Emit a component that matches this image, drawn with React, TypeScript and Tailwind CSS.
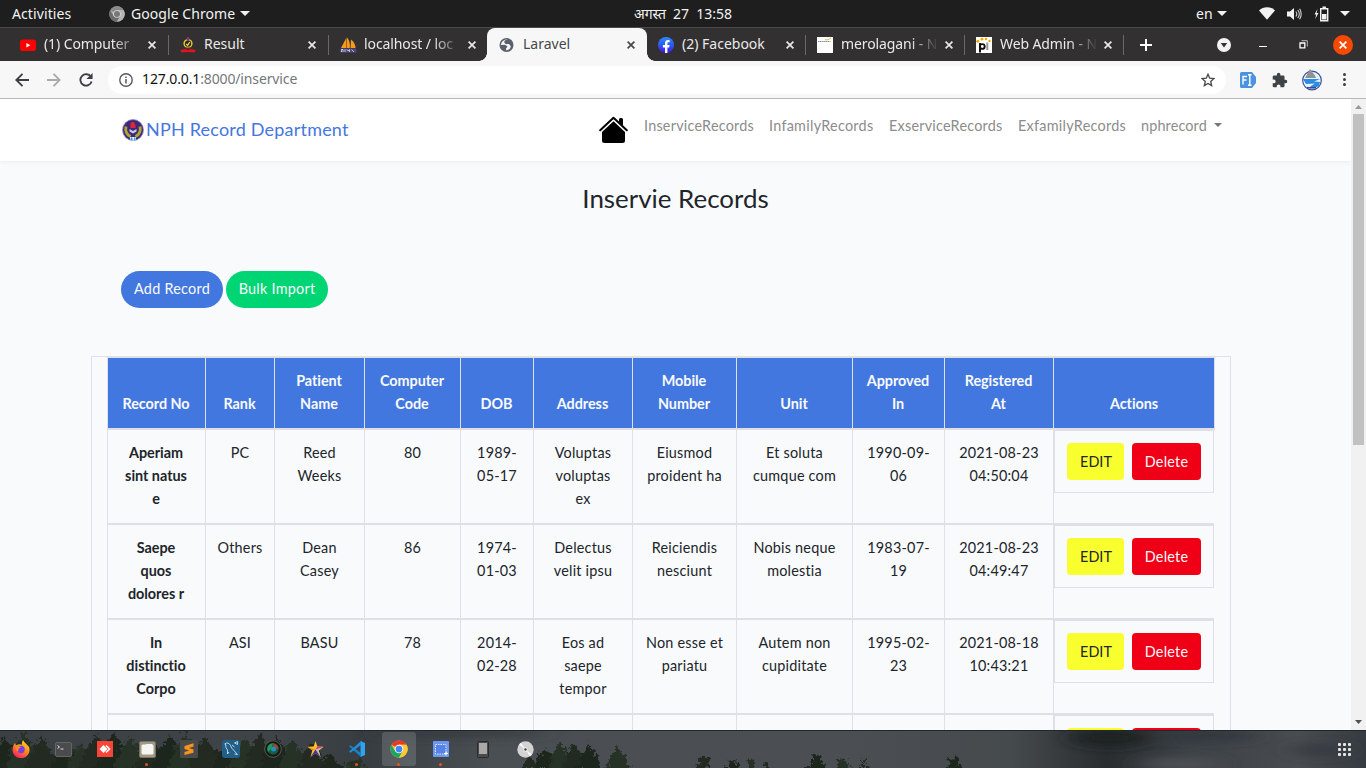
import React from "react";

const UI = "font-['Noto_Sans',sans-serif]";
const PAGE = "font-['Lato','Open_Sans',sans-serif]";

/* ---------- small shared drawings ---------- */

function Caret({ className = "" }: { className?: string }) {
  return (
    <svg width="10" height="5" viewBox="0 0 10 5" className={className}>
      <path d="M0 0h10L5 5z" fill="currentColor" />
    </svg>
  );
}

function Close() {
  return (
    <svg width="8" height="8" viewBox="0 0 8 8" className="shrink-0">
      <path d="M.6.6l6.8 6.8M7.4.6L.6 7.4" stroke="currentColor" strokeWidth="1.7" />
    </svg>
  );
}

function ChromeLogo({ size, mono = false }: { size: number; mono?: boolean }) {
  const c = mono ? ["#8a8a8a", "#6c6c6c", "#b5b5b5", "#777", "#d5d5d5"] : ["#e33b2e", "#1fa463", "#fcc934", "#4285f4", "#fff"];
  return (
    <svg width={size} height={size} viewBox="0 0 48 48">
      <circle cx="24" cy="24" r="23" fill={c[2]} />
      <path d="M24 24L4 12.5A23 23 0 0 1 44 12.5H24z" fill={c[0]} />
      <path d="M4 12.5A23 23 0 0 0 24 47L34 30 24 34 14 30z" fill={c[1]} />
      <path d="M44 12.5H24v10l10 7L24 47A23 23 0 0 0 44 12.5z" fill={c[2]} />
      <circle cx="24" cy="24" r="11.5" fill={c[4]} />
      <circle cx="24" cy="24" r="9" fill={c[3]} />
    </svg>
  );
}

/* ---------- desktop top bar ---------- */

function TopBar() {
  return (
    <header className="relative flex h-[27px] shrink-0 items-center justify-between bg-[#1e1e1e] text-[14px] text-[#f2f2f2]">
      <div className="flex items-center pl-3">
        <span className="w-[97px] tracking-[0.1px]">Activities</span>
        <ChromeLogo size={16} mono />
        <span className="ml-[6px] w-[109px] tracking-[0.06px]">Google Chrome</span>
        <Caret />
      </div>
      <div className="absolute left-[634px] flex gap-[7px] whitespace-pre">
        <span>अगस्त</span>
        <span>27  13:58</span>
      </div>
      <div className="flex items-center pr-4">
        <span className="w-[21px]">en</span>
        <Caret />
        <svg width="16" height="13" viewBox="0 0 16 13" className="ml-8">
          <path d="M0 3.4C4.6-.9 11.400-.9 16 3.400L8 12.800z" fill="#f2f2f2" />
        </svg>
        <svg width="15" height="14" viewBox="0 0 15 14" className="ml-3">
          <path d="M0 4.500h3L7 1v12L3 9.500H0z" fill="#f2f2f2" />
          <path d="M8.800 4.500q2 2.500 0 5M10.800 3q3 4 0 8M12.600 1.800q3.200 5.200 0 10.400" fill="none" stroke="#cfcfcf" strokeWidth="1.100" />
        </svg>
        <svg width="15" height="16" viewBox="0 0 15 16" className="ml-3">
          <path d="M3.500 3L.5 8.500h1.700L1.200 13 4.500 7H2.600z" fill="#f2f2f2" />
          <path d="M6.700 2.700h7v12h-7z" fill="none" stroke="#f2f2f2" strokeWidth="1.400" />
          <path d="M8.500.5h3.400v2H8.500zM8 8h4.500v5.500H8z" fill="#f2f2f2" />
        </svg>
        <Caret className="ml-[11px]" />
      </div>
    </header>
  );
}

/* ---------- favicons ---------- */

const YouTube = () => (
  <svg width="16" height="16" viewBox="0 0 16 16">
    <rect y="2.500" width="16" height="11.500" rx="2.800" fill="#f00" />
    <path d="M6.400 6v4.500l4-2.250z" fill="#fff" />
  </svg>
);

const ResultIcon = () => (
  <svg width="16" height="16" viewBox="0 0 16 16">
    <circle cx="8" cy="6.500" r="3.900" fill="#2c2440" stroke="#e8d524" strokeWidth="1.400" />
    <path d="M7 0h1.800l.6 3H6.500z" fill="#8e2a8a" />
    <path d="M6.300 7l1.300 1.300L9.800 5" fill="none" stroke="#f4e640" strokeWidth="1.200" />
    <path d="M5.500 10.500h5l1 2h-7z" fill="#7a1c2c" />
    <path d="M.3 13.200Q4 11.500 8 12.900q4-1.400 7.700.3l-1.500 2.300Q8 14.300 1.800 15.500z" fill="#e0141e" />
  </svg>
);

const PhpMyAdmin = () => (
  <svg width="17" height="16" viewBox="0 0 17 16">
    <path d="M6.500.5L1 11h5.500zM7 .5q3.500 4 2.800 10.500H7zM11 2.500q4.500 3.500 4.500 8.500h-5z" fill="#f59a1b" />
    <path d="M.5 11.500h15.500l.5 4H0z" fill="#4f4a7d" />
    <path d="M1.500 15v-2.500h1.500V15m2-2.800V15m2-2.500L8 14l1.500-1.500V15m2-2.500L14 15" stroke="#d8d6f2" strokeWidth=".8" fill="none" />
  </svg>
);

const Globe = () => (
  <svg width="15" height="16" viewBox="0 0 15 16">
    <circle cx="7.500" cy="8" r="7" fill="#5b616b" />
    <path d="M9 2.500Q6.500 3 6 5.500l1.500 1.500h2.500l1.800 2.200c-.5 2.600-2 4-4.600 4.200L7 11.500l1.600-2L6 7.800 2 8c.2-3.500 3.300-6 7-5.500z" fill="#f7f7f7" />
    <path d="M9 2.300Q5.500 3 5 5l1.800 2.200 3-.7L12 4z" fill="#5b616b" />
  </svg>
);

const Facebook = () => (
  <svg width="16" height="16" viewBox="0 0 16 16">
    <defs>
      <linearGradient id="fb" x1="0" y1="0" x2="0" y2="1">
        <stop offset="0" stopColor="#2b8cf5" />
        <stop offset=".55" stopColor="#2c55f3" />
        <stop offset="1" stopColor="#4a10e8" />
      </linearGradient>
    </defs>
    <circle cx="8" cy="8" r="8" fill="url(#fb)" />
    <path d="M7 16v-5.500H4.900V8.100H7V6.400c0-2.100 1.200-3.300 3.100-3.300.6 0 1.100.05 1.500.12v2h-1c-.9 0-1.200.6-1.200 1.200v1.700h2.200l-.4 2.400H9.400V16z" fill="#fff" />
  </svg>
);

const Merolagani = () => (
  <svg width="16" height="16" viewBox="0 0 16 16">
    <path d="M0 0h16v16H0z" fill="#fff" />
    <path d="M1 4.500h12.500" stroke="#888" strokeWidth="1.200" strokeDasharray="1.500 .5" />
    <path d="M8 2.800q3 .8 6-1.800" stroke="#d9c443" strokeWidth="1" fill="none" />
  </svg>
);

const WebAdmin = () => (
  <svg width="16" height="16" viewBox="0 0 16 16">
    <path d="M0 0h16v16H0z" fill="#fff" />
    <path d="M4 6v9.500" stroke="#111" strokeWidth="2" />
    <circle cx="6.300" cy="9.500" r="2.400" fill="none" stroke="#111" strokeWidth="1.900" />
    <path d="M11.300 5.500V13" stroke="#999" strokeWidth="2" />
    <g fill="#f5a800">
      <circle cx="1.800" cy="4.200" r="1.500" />
      <circle cx="6" cy="2.200" r="1.400" />
      <circle cx="10" cy="2" r="1.200" />
      <circle cx="13.500" cy="4" r="1.200" />
    </g>
  </svg>
);

/* ---------- browser chrome ---------- */

type TabData = { title: string; icon: React.ReactNode; width: string; fade?: boolean; line?: boolean; active?: boolean };

const tabs: TabData[] = [
  { title: "(1) Computer", icon: <YouTube />, width: "w-[160px]", fade: true, line: true },
  { title: "Result", icon: <ResultIcon />, width: "w-[160px]", line: true },
  { title: "localhost / loc", icon: <PhpMyAdmin />, width: "w-[159px]", fade: true },
  { title: "Laravel", icon: <Globe />, width: "w-[160px] -mr-px", active: true },
  { title: "(2) Facebook", icon: <Facebook />, width: "w-[159px]", line: true },
  { title: "merolagani - N", icon: <Merolagani />, width: "w-[159px]", fade: true, line: true },
  { title: "Web Admin - N", icon: <WebAdmin />, width: "w-[159px]", fade: true, line: true },
];

function Tab({ t }: { t: TabData }) {
  return (
    <div
      className={`${t.width} relative flex h-full shrink-0 items-center pl-3 ${
        t.active ? "rounded-t-[8px] bg-[#f7f7f7] text-[#45474b]" : "text-[#e9e9e9]"
      }`}
    >
      {t.active && (
        <>
          <span className="absolute bottom-0 -left-2 h-2 w-2 bg-[radial-gradient(circle_at_0_0,transparent_7.500px,#f7f7f7_8px)]" />
          <span className="absolute -right-2 bottom-0 h-2 w-2 bg-[radial-gradient(circle_at_100%_0,transparent_7.500px,#f7f7f7_8px)]" />
        </>
      )}
      <span className="flex w-6 shrink-0">{t.icon}</span>
      <span
        className={`mr-[2px] w-[102px] pb-[2px] text-[14px] whitespace-nowrap ${
          t.fade ? "tracking-[-0.1px] [mask-image:linear-gradient(to_right,#000_68%,transparent_96%)]" : ""
        }`}
      >
        {t.title}
      </span>
      <Close />
      {t.line && <span className="absolute top-[7px] -right-px h-5 w-px bg-[#6a6868]" />}
    </div>
  );
}

function TabStrip() {
  return (
    <div className="flex h-[34px] shrink-0 items-center border-t border-[#4b4949] bg-[#333031] pl-2">
      {tabs.map((t) => (
        <Tab key={t.title} t={t} />
      ))}
      <svg width="12" height="12" viewBox="0 0 12 12" className="ml-[17px]">
        <path d="M6 0v12M0 6h12" stroke="#fff" strokeWidth="2" />
      </svg>
      <svg width="14" height="14" viewBox="0 0 14 14" className="ml-[65px]">
        <circle cx="7" cy="7" r="7" fill="#f4f4f4" />
        <path d="M3.800 5h6.400L7 9.500z" fill="#333031" />
      </svg>
      <span className="mt-1 ml-[28px] h-px w-2 bg-white" />
      <svg width="9" height="9" viewBox="0 0 9 9" className="ml-8">
        <path d="M1 3h4.800v4.800H1z" fill="none" stroke="#fff" strokeWidth="1.300" />
        <path d="M2.500.7h5.800v5.800" fill="none" stroke="#bbb" strokeWidth="1" />
      </svg>
      <span className="ml-[25px] flex h-5 w-5 items-center justify-center rounded-full bg-[#f64a04] text-white">
        <Close />
      </span>
    </div>
  );
}

function AddressBar() {
  return (
    <div className="flex h-[38px] shrink-0 items-center border-b border-[#b8b8b8] bg-[#f7f7f7] pl-[15px]">
      <svg width="14" height="14" viewBox="0 0 14 14">
        <path d="M14 7H1.500M7.500.8L1.300 7l6.200 6.200" fill="none" stroke="#3c3f43" strokeWidth="1.900" />
      </svg>
      <svg width="14" height="14" viewBox="0 0 14 14" className="ml-[18px]">
        <path d="M0 7h12.500M6.500.8L12.700 7l-6.200 6.200" fill="none" stroke="#a9abad" strokeWidth="1.900" />
      </svg>
      <svg width="14" height="14" viewBox="0 0 15 15" className="ml-[18px]">
        <path d="M12.700 4A6.100 6.100 0 1 0 13.500 9" fill="none" stroke="#3c3f43" strokeWidth="2" />
        <path d="M14.500 0v6.500H8z" fill="#3c3f43" />
      </svg>
      <div className="ml-[15px] flex h-7 w-[1118px] items-center rounded-full bg-white pr-[11px] pl-[11px]">
        <svg width="14" height="14" viewBox="0 0 14 14">
          <circle cx="7" cy="7" r="6.200" fill="none" stroke="#55585c" strokeWidth="1.400" />
          <path d="M7 6v4.400M7 3.400v1.500" stroke="#55585c" strokeWidth="1.500" />
        </svg>
        <span className="ml-[9px] flex-1 pb-[2px] text-[14px] tracking-[-0.13px] text-[#73777b]">
          <span className="text-[#111]">127.0.0.1</span>:8000/inservice
        </span>
        <svg width="14" height="14" viewBox="0 0 14 14">
          <path d="M7 1.200l1.700 4 4.300.4-3.300 2.800 1 4.200L7 10.400l-3.700 2.200 1-4.200L1 5.600l4.300-.4z" fill="none" stroke="#45484c" strokeWidth="1.300" />
        </svg>
      </div>
      <svg width="16" height="16" viewBox="0 0 16 16" className="ml-[14px]">
        <path d="M1.500 0H12l4 5v6l-4 5H1.500A1.500 1.500 0 0 1 0 14.500v-13A1.500 1.500 0 0 1 1.500 0z" fill="#4a93e0" />
        <path d="M3 12.500V4.500h4M3 8h3.500M8 2.800h3.500M8 13.200h3.500M9.800 3v10" stroke="#fff" strokeWidth="1.400" fill="none" />
      </svg>
      <svg width="16" height="16" viewBox="1 0 23 23" className="ml-4">
        <path
          d="M20.500 11H19V7a2 2 0 0 0-2-2h-4V3.500a2.500 2.500 0 0 0-5 0V5H4a2 2 0 0 0-2 2v3.800h1.500a2.700 2.700 0 0 1 0 5.400H2V20a2 2 0 0 0 2 2h3.800v-1.500a2.700 2.700 0 0 1 5.400 0V22H17a2 2 0 0 0 2-2v-4h1.500a2.500 2.500 0 0 0 0-5z"
          fill="#3f4246"
        />
      </svg>
      <svg width="20" height="22" viewBox="0 0 20 22" className="ml-[14px]">
        <circle cx="10" cy="11.500" r="9.300" fill="#e9f1fa" stroke="#35509e" strokeWidth="1.200" />
        <path d="M8 0l5 6.500 1 2.500H3z" fill="#8f9296" />
        <path d="M1 10h17l-6 2.500 6 .5-1 4q-4 2.500-9 .5l5-3-9 .5z" fill="#2b8be0" />
        <path d="M5 18.800h9" stroke="#34448f" strokeWidth="1.500" />
      </svg>
      <svg width="3" height="13" viewBox="0 0 3 13" className="ml-[21px]" fill="#3c3f43">
        <circle cx="1.500" cy="1.600" r="1.500" />
        <circle cx="1.500" cy="6.500" r="1.500" />
        <circle cx="1.500" cy="11.400" r="1.500" />
      </svg>
    </div>
  );
}

/* ---------- web page ---------- */

function Emblem() {
  return (
    <svg width="22" height="22" viewBox="1 1 22 22" className="mx-px">
      <circle cx="12" cy="12" r="10.500" fill="#3c2a78" stroke="#8b93c4" strokeWidth=".8" />
      <path d="M5 8.500q-1.500 7 4.500 10M19 8.500q1.500 7-4.500 10" stroke="#b5a52f" strokeWidth="2.800" fill="none" />
      <path d="M9.500 5l3-1.500 2 3.500v3h-5z" fill="#e0263a" />
      <path d="M8.500 11l3.500 2 3.500-2v2.500l-3.500 2-3.500-2z" fill="#c9cde8" />
      <path d="M9 19h6l-.5 3.500H9.500z" fill="#e8f4ff" />
      <path d="M10 19.500h1.500V22.500H10zM13 19.500h1.200V22.500H13z" fill="#2f9be8" />
    </svg>
  );
}

function Home() {
  return (
    <svg width="29" height="28" viewBox="0 0 29 28">
      <path d="M20 3.500q0-1.500 1.500-1.500h1q1.500 0 1.500 1.500V10l-4-4z" fill="#000" />
      <path d="M1.200 14.300L14.500 1.800l13.300 12.500" fill="none" stroke="#000" strokeWidth="2" strokeLinecap="round" strokeLinejoin="round" />
      <path d="M14.500 5.300L26 16v8.500q0 2.500-2.500 2.500h-18Q3 27 3 24.500V16z" fill="#000" />
    </svg>
  );
}

function Navbar() {
  return (
    <nav className="relative flex h-[62px] shrink-0 items-start bg-white pr-[129px] pl-[121px] text-[14.400px] text-[#8c8c8c] shadow-[0_2px_4px_rgba(0,0,0,0.045)]">
      <a className="mt-[19px] flex h-6 items-center text-[18px] leading-6 tracking-[0.2px] whitespace-nowrap text-[#4377e0]">
        <Emblem />
        <span className="ml-px pb-[3px]">NPH Record Department</span>
      </a>
      <div className="mt-[17px] ml-auto flex h-7 items-start">
        <Home />
        <ul className="ml-4 flex gap-4 leading-[19px]">
          <li className="w-[109px] tracking-[0.23px]">InserviceRecords</li>
          <li className="w-[104px] tracking-[0.28px]">InfamilyRecords</li>
          <li className="w-[113px] tracking-[0.23px]">ExserviceRecords</li>
          <li className="w-[107px] tracking-[0.28px]">ExfamilyRecords</li>
          <li className="flex w-[81px] tracking-[0.15px]">
            nphrecord
            <svg width="8" height="4" viewBox="0 0 8 4" className="mt-[7px] ml-auto">
              <path d="M0 0h8L4 4z" fill="#777" />
            </svg>
          </li>
        </ul>
      </div>
    </nav>
  );
}

const grid = "grid grid-cols-[98px_69px_90px_96px_73px_99px_104px_116px_92px_109px_162px]";

const heads = ["Record No", "Rank", "Patient\nName", "Computer\nCode", "DOB", "Address", "Mobile\nNumber", "Unit", "Approved\nIn", "Registered\nAt", "Actions"];

const rows = [
  ["Aperiam\nsint natus\ne", "PC", "Reed\nWeeks", "80", "1989-\n05-17", "Voluptas\nvoluptas\nex", "Eiusmod\nproident ha", "Et soluta\ncumque com", "1990-09-\n06", "2021-08-23\n04:50:04"],
  ["Saepe\nquos\ndolores r", "Others", "Dean\nCasey", "86", "1974-\n01-03", "Delectus\nvelit ipsu", "Reiciendis\nnesciunt", "Nobis neque\nmolestia", "1983-07-\n19", "2021-08-23\n04:49:47"],
  ["In\ndistinctio\nCorpo", "ASI", "BASU", "78", "2014-\n02-28", "Eos ad\nsaepe\ntempor", "Non esse et\npariatu", "Autem non\ncupiditate", "1995-02-\n23", "2021-08-18\n10:43:21"],
  ["", "", "", "", "", "", "", "", "", ""],
];

function RecordsTable() {
  return (
    <section className="ml-[91px] w-[1140px] border border-[#dee2e6] px-[15px] text-center text-[14.400px] leading-[23px] tracking-[0.22px] whitespace-pre">
      <div className={`${grid} h-[73px] w-[1108px] border-t border-r border-b-2 border-[#dee0e6] bg-[#4377e0] font-bold text-[#f8fafc]`}>
        {heads.map((h) => (
          <div key={h} className="flex items-end justify-center border-l border-[#dee0e6] pr-px pb-[13px] tracking-[-0.040px]">
            {h}
          </div>
        ))}
      </div>
      {rows.map((r, i) => (
        <div key={i} className={`${grid} h-[95px] w-[1108px]`}>
          {r.map((c, j) => (
            <div key={j} className={`border-b-2 border-l border-[#dee0e6] pt-[11px] ${j === 0 ? "pr-px font-bold tracking-[-0.020px]" : ""}`}>
              {c}
            </div>
          ))}
          <div className="mr-px border-b-2 border-l border-[#dee0e6]">
            <div className="flex h-[63px] gap-2 border border-[#dee0e6] pt-3 pl-3">
              <button className="h-[37px] w-[57px] rounded-[4px] bg-[#f9ff2e] pb-px pl-px tracking-[0px] text-[#212529]">EDIT</button>
              <button className="h-[37px] w-[69px] rounded-[4px] bg-[#ef0017] pb-px text-[#f8fafc]">Delete</button>
            </div>
          </div>
        </div>
      ))}
    </section>
  );
}

function Scrollbar() {
  return (
    <aside className="flex w-[15px] shrink-0 flex-col items-center justify-between bg-[#f1f1f1] pt-[6px] pb-[6px]">
      <div className="flex flex-col items-center gap-[5px]">
        <svg width="7" height="4" viewBox="0 0 7 4">
          <path d="M3.500 0L7 4H0z" fill="#9a9a9a" />
        </svg>
        <div className="h-[331px] w-[11px] bg-[#c1c1c1]" />
      </div>
      <svg width="7" height="4" viewBox="0 0 7 4">
        <path d="M0 0h7L3.500 4z" fill="#505050" />
      </svg>
    </aside>
  );
}

function WebPage() {
  return (
    <div className={`${PAGE} flex h-[631px] shrink-0 overflow-hidden bg-[#f8fafc] text-[#212529]`}>
      <main className="flex flex-1 flex-col overflow-hidden">
        <Navbar />
        <h1 className="mt-[21px] h-8 text-center text-[25.920px] leading-8">Inservie Records</h1>
        <div className="mt-[57px] mb-[48px] flex gap-[3px] pl-[121px] text-[14.400px] tracking-[0.25px] text-[#f8fafc]">
          <button className="h-[37px] w-[102px] rounded-full bg-[#4377e0] pb-px">Add Record</button>
          <button className="h-[37px] w-[102px] rounded-full bg-[#00d574] pb-px">Bulk Import</button>
        </div>
        <RecordsTable />
      </main>
      <Scrollbar />
    </div>
  );
}

/* ---------- dock ---------- */

/* Each tree is [centre x, top y, half width at the bottom edge]. */
const trees = [
  [5, 6, 18], [24, 1, 20], [42, 5, 18], [64, 16, 14], [80, 14, 15], [97, 4, 20], [114, 2, 19], [131, 7, 19], [150, 12, 18],
  [170, 4, 19], [186, 2, 20], [205, 5, 18], [226, 20, 16], [245, 9, 19], [260, 2, 18], [276, 6, 18], [293, 7, 16], [312, 14, 16],
  [330, 24, 12], [356, 28, 12], [530, 26, 8], [546, 18, 13], [560, 12, 14], [574, 13, 14], [589, 15, 14], [618, 17, 14], [704, 25, 11],
  [733, 30, 8], [751, 28, 6], [766, 32, 4], [817, 24, 11], [843, 27, 8], [864, 31, 5], [954, 27, 8],
];

function treePath([cx, top, half]: number[]) {
  const mid = (top + 40) / 2;
  return `M${cx} ${top}L${cx + half * 0.45} ${mid - 3}L${cx + half * 0.7} ${mid + 4}L${cx + half} 40H${cx - half}L${cx - half * 0.65} ${mid + 3}L${cx - half * 0.5} ${mid - 4}Z`;
}

function Wallpaper() {
  return (
    <svg width="1366" height="38" viewBox="0 0 1366 38" className="absolute inset-0">
      <defs>
        <linearGradient id="sky">
          <stop offset="0" stopColor="#3b4045" />
          <stop offset=".2" stopColor="#3f4448" />
          <stop offset=".27" stopColor="#373d41" />
          <stop offset=".36" stopColor="#4a4f53" />
          <stop offset=".62" stopColor="#4b4e52" />
          <stop offset=".74" stopColor="#454a4d" />
          <stop offset=".81" stopColor="#292d2f" />
          <stop offset=".87" stopColor="#3b4145" />
          <stop offset=".95" stopColor="#494c50" />
          <stop offset="1" stopColor="#353b40" />
        </linearGradient>
        <filter id="soft" x="-20%" y="-50%" width="140%" height="200%">
          <feGaussianBlur stdDeviation="12 5" />
        </filter>
        <filter id="leaf">
          <feTurbulence type="fractalNoise" baseFrequency=".22" numOctaves="3" seed="4" result="n" />
          <feDisplacementMap in="SourceGraphic" in2="n" scale="13" xChannelSelector="R" yChannelSelector="G" />
          <feGaussianBlur stdDeviation=".5" />
        </filter>
      </defs>
      <path d="M0 0h1366v38H0z" fill="url(#sky)" />
      <g filter="url(#soft)">
        <ellipse cx="1110" cy="8" rx="40" ry="9" fill="#1d2122" />
        <ellipse cx="1210" cy="6" rx="50" ry="5" fill="#2f363a" />
        <ellipse cx="1180" cy="34" rx="40" ry="6" fill="#505357" />
        <ellipse cx="460" cy="3" rx="90" ry="4" fill="#32383c" />
        <ellipse cx="1320" cy="20" rx="30" ry="6" fill="#363b41" />
      </g>
      <g filter="url(#leaf)">
        <path d="M-10 20L60 27 90 18 215 20 250 24 300 22 345 36 345 50H-10z" fill="#1f2720" />
        {trees.map((t, i) => (
          <path key={i} d={treePath(t)} fill={["#1f281e", "#283226", "#242c23"][i % 3]} />
        ))}
      </g>
      <path d="M0 .5h1366" stroke="#22262a" />
    </svg>
  );
}

const Firefox = () => (
  <svg width="18" height="18" viewBox="0 0 18 18">
    <defs>
      <linearGradient id="fx" x1=".8" y1="0" x2=".2" y2="1">
        <stop offset="0" stopColor="#ffe226" />
        <stop offset=".45" stopColor="#ff8a1f" />
        <stop offset="1" stopColor="#f5156c" />
      </linearGradient>
    </defs>
    <path d="M11 0q1 2.500 3.500 4.200Q17.700 6.500 17.600 10A8.600 8.200 0 0 1 .4 10Q.4 6 3 3l1 2.300L6 4.500q3-.5 4 .5Q9.500 2 11 0z" fill="url(#fx)" />
    <circle cx="9" cy="9.500" r="3.700" fill="#7a3fe0" />
    <path d="M3 7q3-1.500 6 0L6.500 9q0 2.500-1 2.500T3 7z" fill="#ff8a1f" />
  </svg>
);

const Terminal = () => (
  <svg width="17" height="15" viewBox="0 0 17 15">
    <rect x=".5" y=".5" width="16" height="14" rx="1.500" fill="#4b4b4d" stroke="#656567" />
    <path d="M2.500 3.500L4.500 5l-2 1.500M5.500 7h3" stroke="#ddd" fill="none" />
  </svg>
);

const AnyDesk = () => (
  <svg width="16" height="16" viewBox="0 0 16 16">
    <path d="M0 0h16v16H0z" fill="#fb4437" />
    <path d="M6.500 4l4 4-4 4-4-4z" fill="#fff" />
    <path d="M9 4.500L12.500 8 9 11.500" stroke="#fff" strokeWidth="1.600" fill="none" />
  </svg>
);

const Files = () => (
  <svg width="17" height="17" viewBox="0 0 17 17">
    <rect x=".5" y=".5" width="16" height="16" rx="1.500" fill="#a09a88" stroke="#77725f" />
    <path d="M2.500 4.500l1-1h3l1-.5h5.500l1.500 1.500v8l-1 1h-10l-1-1z" fill="#f7f5f2" />
  </svg>
);

const Sublime = () => (
  <svg width="18" height="18" viewBox="0 0 18 18">
    <rect width="18" height="18" rx="1.500" fill="#4a4a4b" />
    <path d="M4.500 6L13.500 3.300v3.300L9 7.900l4.500 1.600v3.200L4.500 15v-3l4.700-1.400-4.700-1.700z" fill="#f7941e" />
  </svg>
);

const Workbench = () => (
  <svg width="18" height="18" viewBox="0 0 18 18">
    <rect width="18" height="18" rx="3" fill="#235e86" />
    <path d="M2.500 4q4-2.500 6 1.500 1 3 3 4.500l4 4.500-3-.5M3.500 4q0 4 2 6v4l1.500-2M12.500 3l3-1.500v3zM10 5l2.500 2" stroke="#c7dcea" fill="none" strokeWidth=".9" />
  </svg>
);

const Camera = () => (
  <svg width="18" height="18" viewBox="0 0 18 18">
    <circle cx="9" cy="9" r="8.300" fill="#161616" stroke="#6a6a6a" strokeWidth=".8" />
    <circle cx="9" cy="9" r="5.800" fill="#1a5a45" />
    <path d="M9 3.200A5.800 5.800 0 0 0 4 12l3-3z" fill="#1b9b5c" />
    <path d="M9 3.200A5.800 5.800 0 0 1 14.500 9L10 8z" fill="#9a4a2a" />
    <circle cx="9.500" cy="9" r="2.500" fill="#2a8fc0" />
  </svg>
);

const Star = () => (
  <svg width="17" height="18" viewBox="0 0 17 18">
    <path d="M8.500 1l1.900 5.500 6 .3-4.700 3.700L13.500 17 8.500 13.200 3.500 17l1.800-6.500L.6 6.800l6-.3z" fill="#fbc02d" />
    <path d="M8.500 9.500l7.900-2.700-4.700 3.700L13.500 17z" fill="#b9bcc0" />
    <path d="M8.500 9.500L3.500 17l5-3.800 5 3.800z" fill="#4b2fa0" />
    <path d="M8.500 9.500l1.900-3 6 .3z" fill="#e0356a" />
    <path d="M.6 6.800l7.900 2.700-3.200 1z" fill="#f58220" />
  </svg>
);

const Code = () => (
  <svg width="16" height="16" viewBox="0 0 16 16">
    <path d="M11.500 0L16 2v12l-4.500 2z" fill="#2ea3f2" />
    <path d="M0 5.200l1.500-1L12 12v4z" fill="#1780c9" />
    <path d="M0 10.800l1.500 1L12 4V0z" fill="#1f8ddb" />
  </svg>
);

const Screenshot = () => (
  <svg width="16" height="16" viewBox="0 0 16 16">
    <rect width="16" height="16" rx="1" fill="#6b97f3" />
    <path d="M2.500 3.500h10.500v9.500H2.500z" fill="#5683e6" stroke="#dbe6ff" strokeDasharray="1.500 1" />
    <path d="M13 10.500v4M11 12.500h4" stroke="#fff" />
  </svg>
);

const Phone = () => (
  <svg width="12" height="17" viewBox="0 0 12 17">
    <rect x=".5" y=".5" width="11" height="16" rx="1" fill="#4b4b4b" stroke="#2a2a2a" />
    <path d="M2 2h8v11H2z" fill="#a9a9a9" />
  </svg>
);

const Disc = () => (
  <svg width="17" height="17" viewBox="0 0 17 17">
    <circle cx="8.500" cy="8.500" r="8.200" fill="#d3d3d3" />
    <path d="M8.500 8.500L2 3.500 4 1.700zM8.500 8.500l6.500 5-2 1.800z" fill="#f8f8f8" />
    <circle cx="8.500" cy="8.500" r="2.200" fill="#efefef" />
    <circle cx="8.500" cy="8.500" r="1.200" fill="#444" />
  </svg>
);

const apps: { icon: React.ReactNode; running?: boolean; focused?: boolean }[] = [
  { icon: <Firefox /> },
  { icon: <Terminal /> },
  { icon: <AnyDesk /> },
  { icon: <Files />, running: true },
  { icon: <Sublime /> },
  { icon: <Workbench /> },
  { icon: <Camera /> },
  { icon: <Star /> },
  { icon: <Code />, running: true },
  { icon: <ChromeLogo size={18} />, running: true, focused: true },
  { icon: <Screenshot />, running: true },
  { icon: <Phone /> },
  { icon: <Disc /> },
];

function Dock() {
  return (
    <footer className="relative flex h-[38px] shrink-0 items-center justify-between overflow-hidden pr-[15px]">
      <Wallpaper />
      <div className="relative flex gap-2 pl-1">
        {apps.map((a, i) => (
          <div key={i} className={`relative flex h-[34px] w-[34px] items-center justify-center rounded-[3px] ${a.focused ? "bg-white/15" : ""}`}>
            {a.icon}
            {a.running && <span className="absolute bottom-0 left-[15px] h-[3px] w-[3px] rounded-full bg-[#e95420]" />}
          </div>
        ))}
      </div>
      <div className="relative grid grid-cols-3 gap-[2px]">
        {Array.from({ length: 9 }, (_, i) => (
          <span key={i} className="h-[3px] w-[3px] rounded-[1px] bg-[#e6e6e6]" />
        ))}
      </div>
    </footer>
  );
}

export default function App() {
  return (
    <div className={`${UI} flex h-[768px] w-[1366px] flex-col overflow-hidden`}>
      <TopBar />
      <TabStrip />
      <AddressBar />
      <WebPage />
      <Dock />
    </div>
  );
}
